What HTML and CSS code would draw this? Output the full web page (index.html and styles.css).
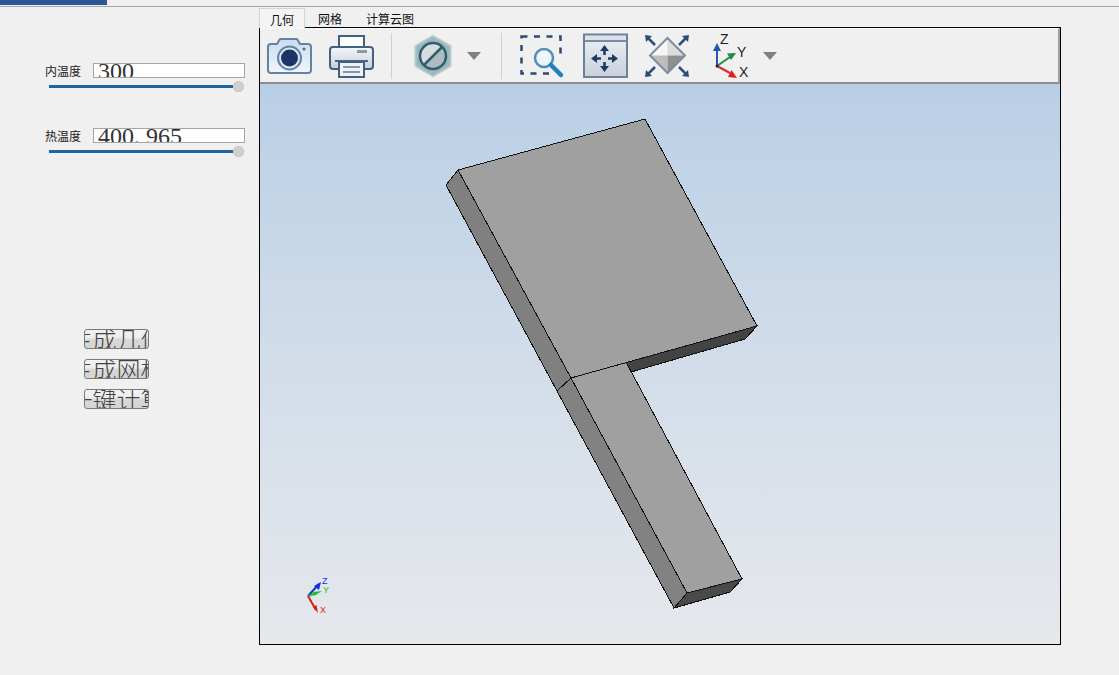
FILE: index.html
```html
<!DOCTYPE html>
<html lang="zh">
<head>
<meta charset="utf-8">
<title>几何</title>
<link rel="stylesheet" href="styles.css">
</head>
<body>
<div class="topbar"><div class="topbar-tab"></div></div>
<div class="main">
  <aside class="sidebar">
    <div class="field">
      <div class="field-row"><span class="field-label">内温度</span><div class="input">300</div></div>
      <div class="slider"><div class="track"></div><div class="thumb"></div></div>
    </div>
    <div class="field">
      <div class="field-row"><span class="field-label">热温度</span><div class="input">400. 965</div></div>
      <div class="slider"><div class="track"></div><div class="thumb"></div></div>
    </div>
    <div class="actions">
      <div class="btn"><span>生成几何</span></div>
      <div class="btn"><span>生成网格</span></div>
      <div class="btn"><span>一键计算</span></div>
    </div>
  </aside>
  <section class="viewer">
    <nav class="tabs">
      <div class="tab tab-active">几何</div>
      <div class="tab">网格</div>
      <div class="tab">计算云图</div>
    </nav>
    <div class="frame">
      <div class="toolbar">
        <svg class="ico cam" viewBox="266 33 48 46">
          <defs>
            <linearGradient id="g1" x1="0" y1="0" x2="0" y2="1"><stop offset="0" stop-color="#c9dcf1"/><stop offset="1" stop-color="#f2f6fb"/></linearGradient>
            <linearGradient id="g2" x1="0" y1="0" x2="0" y2="1"><stop offset="0" stop-color="#f4f6f9"/><stop offset="1" stop-color="#c4cfdc"/></linearGradient>
            <linearGradient id="g3" x1="0" y1="0" x2="1" y2="1"><stop offset="0.5" stop-color="#d9dcde"/><stop offset="0.5" stop-color="#aebcc0"/></linearGradient>
            <linearGradient id="g4" x1="0" y1="0" x2="0" y2="1"><stop offset="0" stop-color="#eef1f5"/><stop offset="1" stop-color="#c8d0dc"/></linearGradient>
          </defs>
          <path d="M268 47a3 3 0 0 1 3-3h6l3-5h17l3 5h8a3 3 0 0 1 3 3v23a3 3 0 0 1-3 3h-37a3 3 0 0 1-3-3z" fill="url(#g1)" stroke="#6482a3" stroke-width="2"/>
          <circle cx="289.500" cy="58" r="11.500" fill="#dfe8f2" stroke="#6482a3" stroke-width="2"/>
          <circle cx="289.500" cy="58" r="8.500" fill="#1c3566"/>
          <circle cx="304" cy="49" r="1.500" fill="#4e6a8f"/>
        </svg>
        <svg class="ico prn" viewBox="329 33 46 46">
          <rect x="339" y="36" width="25" height="13" fill="#fbfcfd" stroke="#44607f" stroke-width="2"/>
          <path d="M333 47h37a3 3 0 0 1 3 3v16a3 3 0 0 1-3 3h-37a3 3 0 0 1-3-3v-16a3 3 0 0 1 3-3z" fill="url(#g2)" stroke="#44607f" stroke-width="2"/>
          <rect x="357" y="50" width="10" height="3" fill="#8c99aa"/>
          <rect x="335" y="60" width="33" height="2" fill="#4a6487"/>
          <rect x="339" y="62" width="25" height="15" fill="#eef1f5" stroke="#44607f" stroke-width="2"/>
          <path d="M343 67h17M343 72h17" stroke="#8296ae" stroke-width="2"/>
        </svg>
        <div class="sep"></div>
        <svg class="ico forbid" viewBox="410 33 46 46">
          <path d="M433 36l17.500 10v20l-17.500 10-17.500-10v-20z" fill="#9db6bb" stroke="#b4c9cc" stroke-width="2"/>
          <circle cx="433" cy="56" r="13" fill="url(#g3)" stroke="#2e5e6e" stroke-width="2.500"/>
          <path d="M424 65l18-18" stroke="#2e5e6e" stroke-width="2.500"/>
        </svg>
        <svg class="caret c1" viewBox="0 0 14 8"><path d="M0 0h14l-7 8z"/></svg>
        <div class="sep sep2"></div>
        <svg class="ico zoomb" viewBox="519 33 46 46">
          <rect x="521.500" y="36.500" width="39" height="37" fill="none" stroke="#2d4a72" stroke-width="2.500" stroke-dasharray="6 6.500"/>
          <rect x="549" y="59" width="14" height="18" fill="#f0f0f0"/>
          <circle cx="544" cy="58" r="9" fill="#eef4f9" stroke="#4d8fb9" stroke-width="2.500"/>
          <path d="M551 65l10 10" stroke="#1f7fbf" stroke-width="4.500" stroke-linecap="round"/>
        </svg>
        <svg class="ico pan" viewBox="582 33 46 46">
          <rect x="584" y="34.500" width="43" height="42.500" fill="url(#g4)" stroke="#6f8097" stroke-width="2"/>
          <rect x="585" y="36" width="41" height="4" fill="#dbe1ea"/>
          <path d="M585 41h41" stroke="#7a8aa0" stroke-width="2"/>
          <g fill="#1f3b62">
            <path d="M604.500 45l-4.500 6h3.200v4h2.600v-4h3.200z"/>
            <path d="M604.500 72l-4.500-6h3.200v-4h2.600v4h3.200z"/>
            <path d="M591 58.500l6-4.500v3.200h4v2.600h-4v3.200z"/>
            <path d="M618 58.500l-6-4.500v3.200h-4v2.600h4v3.200z"/>
          </g>
        </svg>
        <svg class="ico fit" viewBox="644 33 46 46">
          <path d="M667.500 38l-17.500 17.500h17.500z" fill="#f6f6f6"/>
          <path d="M667.500 38l17.500 17.500h-17.500z" fill="#dcdcdc"/>
          <path d="M650 55.500l17.500 17.500v-17.500z" fill="#bdbdbd"/>
          <path d="M685 55.500l-17.500 17.500v-17.500z" fill="#8f8f8f"/>
          <path d="M667.500 38l17.500 17.500-17.500 17.500-17.500-17.500z" fill="none" stroke="#7d8ca0" stroke-width="2"/>
          <g fill="#2b4d78">
            <path d="M645 35l7 1-6 6z"/>
            <path d="M689 35l-7 1 6 6z"/>
            <path d="M645 77l7-1-6-6z"/>
            <path d="M689 77l-7-1 6-6z"/>
          </g>
          <path d="M648 38l7 7M686 38l-7 7M648 74l7-7M686 74l-7-7" stroke="#2b4d78" stroke-width="2.500"/>
        </svg>
        <svg class="ico axes" viewBox="711 31 46 50">
          <path d="M717 66v-18" stroke="#2a54a8" stroke-width="2"/>
          <path d="M717 43l-4 8h8z" fill="#2a54a8"/>
          <path d="M717 66l13-9" stroke="#1f8a44" stroke-width="2"/>
          <path d="M736 53l-9 .5 4 6.500z" fill="#1f8a44"/>
          <path d="M717 66l13 7" stroke="#d42a2a" stroke-width="2"/>
          <path d="M737 78l-9-1 3.500-7z" fill="#e02020"/>
          <circle cx="717" cy="66" r="1.500" fill="#222"/>
          <text class="axis-text" x="720" y="44">Z</text>
          <text class="axis-text" x="737" y="57">Y</text>
          <text class="axis-text" x="739" y="77">X</text>
        </svg>
        <svg class="caret c2" viewBox="0 0 14 8"><path d="M0 0h14l-7 8z"/></svg>
      </div>
      <div class="scene">
        <svg class="model" viewBox="260 84 800 560">
          <g class="solid">
            <polygon points="446,185 458,170 571,378 557,391" fill="#808080"/>
            <polygon points="557,391 571,378 687,593 674,608" fill="#828282"/>
            <polygon points="626,362 757,326 745,339 631,372" fill="#434343"/>
            <polygon points="687,593 742,579 730,592 674,608" fill="#4a4a4a"/>
            <polygon points="571,378 626,362 742,579 687,593" fill="#a0a0a0"/>
            <polygon points="458,170 645,119 757,326 571,378" fill="#a0a0a0"/>
          </g>
          <path d="M308 596l11-12" stroke="#1030e0" stroke-width="2"/>
          <path d="M321 582l-2 8-5-4z" fill="#1030e0"/>
          <path d="M308 596l9-3" stroke="#18c030" stroke-width="2"/>
          <path d="M322 591l-8 5-1-4z" fill="#18c030"/>
          <path d="M308 596l8 14" stroke="#e01818" stroke-width="2"/>
          <path d="M318 613l-5-6 3.500-2z" fill="#e01818"/>
          <text class="mini z" x="322" y="583.500">Z</text>
          <text class="mini y" x="323" y="593">Y</text>
          <text class="mini x" x="320" y="613">X</text>
        </svg>
      </div>
    </div>
  </section>
</div>
</body>
</html>
```
FILE: styles.css
```css
* { box-sizing: border-box; }
html, body { margin: 0; padding: 0; }
body {
  width: 1119px;
  height: 675px;
  overflow: hidden;
  background: #f0f0f0;
  font-family: "Noto Sans CJK SC", "Liberation Sans", sans-serif;
  font-size: 12px;
  color: #111;
}
.topbar { height: 7px; border-bottom: 1px solid #a8a8a8; padding-bottom: 1px; }
.topbar-tab { width: 107px; height: 5px; background: #2b5797; }
.main { display: flex; align-items: flex-start; }
.sidebar { width: 259px; flex: none; padding-top: 56px; }
.field { padding-left: 45px; height: 65px; }
.field-row { display: flex; align-items: center; height: 15px; }
.field-label { width: 48px; line-height: 15px; margin-top: -1px; color: #222; }
.input {
  width: 152px;
  height: 15px;
  background: #fff;
  border: 1px solid #a6a6a6;
  overflow: hidden;
  padding-left: 4px;
  font-family: "Liberation Serif", serif;
  font-size: 24px;
  line-height: 15px;
  white-space: pre;
  color: #333;
}
.slider { display: flex; align-items: center; margin: 3px 0 0 4px; width: 195px; height: 11px; }
.track { flex: 1; height: 2.500px; background: #1f65a0; }
.thumb { width: 11px; height: 11px; border-radius: 50%; background: #cfcfcf; border: 1px dotted #b8b8b8; }
.actions { margin: 136px 0 0 84px; display: flex; flex-direction: column; gap: 10px; }
.btn {
  width: 65px;
  height: 20px;
  border: 1px solid #7a7a7a;
  border-radius: 3px;
  background: linear-gradient(#f2f2f2 0, #ececec 45%, #d8d8d8 50%, #d4d4d4 100%);
  display: flex;
  justify-content: center;
  align-items: center;
  overflow: hidden;
  font-size: 24px;
  font-weight: 300;
  line-height: 24px;
  white-space: nowrap;
  color: #444;
}
.btn span { flex: none; }
.viewer { flex: none; width: 802px; }
.tabs { display: flex; height: 20px; margin-top: 1px; }
.tab { padding: 3px 12px 0; line-height: 16px; }
.tab-active { padding: 3px 10px 0; background: #f4f4f4; border: 1px solid #d4d4d4; border-bottom: none; width: 46px; margin-right: 1px; }
.frame { height: 618px; border: 1px solid #000; display: flex; flex-direction: column; margin-top: -1px; }
.toolbar {
  height: 56px;
  flex: none;
  display: flex;
  align-items: center;
  background: #f0f0f0;
  border-top: 1px solid #fafafa;
  border-right: 2px solid #a0a0a0;
  border-bottom: 2px solid #8c8c8c;
  padding: 1px 0 0 6px;
}
.ico { height: 46px; flex: none; display: block; }
.cam { width: 48px; }
.prn { width: 46px; margin-left: 15px; }
.sep { width: 1px; height: 46px; background: #d0d0d0; margin-left: 16px; flex: none; }
.forbid { width: 46px; margin-left: 18px; }
.caret { width: 14px; height: 8px; flex: none; fill: #808080; }
.c1 { margin-left: 11px; }
.sep2 { margin-left: 20px; }
.zoomb { width: 46px; margin-left: 17px; }
.pan { width: 46px; margin-left: 17px; }
.fit { width: 46px; margin-left: 16px; }
.axes { width: 46px; height: 50px; margin-left: 21px; }
.c2 { margin-left: 6px; }
.axis-text { font-family: "Liberation Sans", sans-serif; font-size: 14px; fill: #222; }
.scene { flex: 1; min-height: 0; background: linear-gradient(#b9cfe6 0%, #d2dde9 50%, #e6e8ec 100%); }
.model { display: block; width: 100%; height: 100%; }
.solid { stroke: #111; stroke-width: 1px; shape-rendering: crispEdges; }
.mini { font-family: "Liberation Sans", sans-serif; font-size: 9px; }
.z { fill: #1030e0; }
.y { fill: #18c030; }
.x { fill: #e01818; }
```
